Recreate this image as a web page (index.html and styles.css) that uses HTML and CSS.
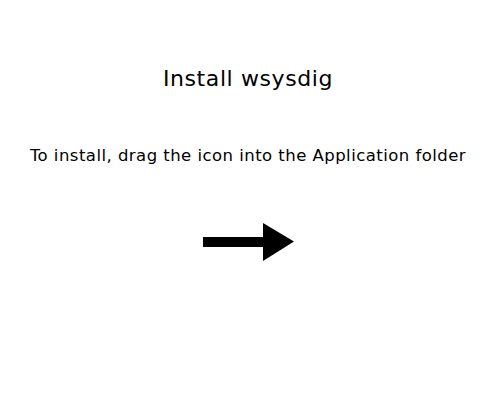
FILE: index.html
```html
<!DOCTYPE html>
<html>
<head>
<meta charset="utf-8">
<link rel="stylesheet" href="styles.css">
</head>
<body>
<main class="installer">
  <h1 class="title">Install wsysdig</h1>
  <p class="hint">To install, drag the icon into the Application folder</p>
  <div class="arrow-row">
    <svg class="arrow" width="92" height="39" viewBox="0 0 92 39">
      <rect x="0" y="14" width="61" height="10" fill="#000"/>
      <polygon points="60,0 91,18.5 60,38" fill="#000"/>
    </svg>
  </div>
</main>
</body>
</html>
```
FILE: styles.css
```css
html, body {
  margin: 0;
  padding: 0;
  background: #fff;
}
body {
  font-family: "DejaVu Sans", "Liberation Sans", sans-serif;
  color: #000;
}
.installer {
  display: flex;
  flex-direction: column;
  align-items: center;
  width: 496px;
}
.title {
  margin: 64px 0 0;
  font-size: 22px;
  font-weight: 400;
  line-height: 30px;
  letter-spacing: 0.6px;
}
.hint {
  margin: 50px 0 0;
  font-size: 16.5px;
  line-height: 24px;
  letter-spacing: 0.46px;
}
.arrow-row {
  margin-top: 55px;
  padding-left: 2px;
  display: flex;
}
.arrow {
  display: block;
}
```
